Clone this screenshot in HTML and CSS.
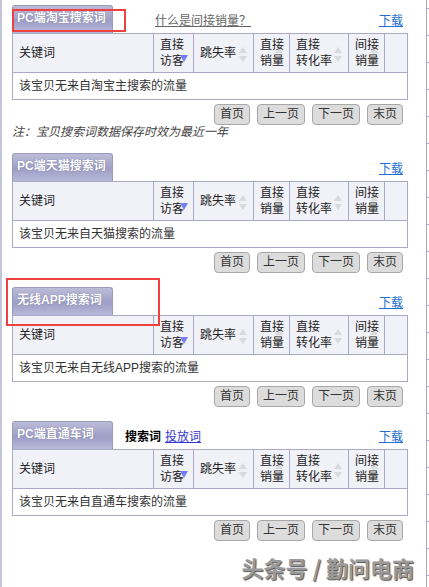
FILE: index.html
```html
<!DOCTYPE html>
<html lang="zh-CN">
<head>
  <meta charset="UTF-8" />
  <title>搜索词</title>
  <link rel="stylesheet" href="styles.css">
</head>
<body>
  <div class="page">
    <main class="content">

      <section class="panel">
        <div class="panel-head">
          <span class="tab">PC端淘宝搜索词</span>
          <a class="help" href="#">什么是间接销量？</a>
          <a class="download" href="#">下载</a>
        </div>
        <table class="grid">
          <colgroup>
            <col class="c-key"><col class="c-visit"><col class="c-bounce"><col class="c-sale"><col class="c-rate"><col class="c-sale"><col class="c-rest">
          </colgroup>
          <thead>
            <tr>
              <th>关键词</th>
              <th>直接<br>访客<span class="sort sort-desc"></span></th>
              <th>跳失率<span class="sort"></span></th>
              <th>直接<br>销量<span class="sort"></span></th>
              <th>直接<br>转化率<span class="sort"></span></th>
              <th>间接<br>销量<span class="sort"></span></th>
              <th></th>
            </tr>
          </thead>
          <tbody>
            <tr><td colspan="7">该宝贝无来自淘宝主搜索的流量</td></tr>
          </tbody>
        </table>
        <div class="pager">
          <button>首页</button><button>上一页</button><button>下一页</button><button>末页</button>
        </div>
        <p class="note">注：宝贝搜索词数据保存时效为最近一年</p>
        <span class="mark mark-first"></span>
      </section>

      <section class="panel">
        <div class="panel-head">
          <span class="tab">PC端天猫搜索词</span>
          <a class="download" href="#">下载</a>
        </div>
        <table class="grid">
          <colgroup>
            <col class="c-key"><col class="c-visit"><col class="c-bounce"><col class="c-sale"><col class="c-rate"><col class="c-sale"><col class="c-rest">
          </colgroup>
          <thead>
            <tr>
              <th>关键词</th>
              <th>直接<br>访客<span class="sort sort-desc"></span></th>
              <th>跳失率<span class="sort"></span></th>
              <th>直接<br>销量<span class="sort"></span></th>
              <th>直接<br>转化率<span class="sort"></span></th>
              <th>间接<br>销量<span class="sort"></span></th>
              <th></th>
            </tr>
          </thead>
          <tbody>
            <tr><td colspan="7">该宝贝无来自天猫搜索的流量</td></tr>
          </tbody>
        </table>
        <div class="pager">
          <button>首页</button><button>上一页</button><button>下一页</button><button>末页</button>
        </div>
      </section>

      <section class="panel">
        <div class="panel-head">
          <span class="tab">无线APP搜索词</span>
          <a class="download" href="#">下载</a>
        </div>
        <table class="grid">
          <colgroup>
            <col class="c-key"><col class="c-visit"><col class="c-bounce"><col class="c-sale"><col class="c-rate"><col class="c-sale"><col class="c-rest">
          </colgroup>
          <thead>
            <tr>
              <th>关键词</th>
              <th>直接<br>访客<span class="sort sort-desc"></span></th>
              <th>跳失率<span class="sort"></span></th>
              <th>直接<br>销量<span class="sort"></span></th>
              <th>直接<br>转化率<span class="sort"></span></th>
              <th>间接<br>销量<span class="sort"></span></th>
              <th></th>
            </tr>
          </thead>
          <tbody>
            <tr><td colspan="7">该宝贝无来自无线APP搜索的流量</td></tr>
          </tbody>
        </table>
        <div class="pager">
          <button>首页</button><button>上一页</button><button>下一页</button><button>末页</button>
        </div>
        <span class="mark mark-wireless"></span>
      </section>

      <section class="panel">
        <div class="panel-head">
          <span class="tab">PC端直通车词</span>
          <span class="kind">搜索词</span>
          <a class="kind-link" href="#">投放词</a>
          <a class="download" href="#">下载</a>
        </div>
        <table class="grid">
          <colgroup>
            <col class="c-key"><col class="c-visit"><col class="c-bounce"><col class="c-sale"><col class="c-rate"><col class="c-sale"><col class="c-rest">
          </colgroup>
          <thead>
            <tr>
              <th>关键词</th>
              <th>直接<br>访客<span class="sort sort-desc"></span></th>
              <th>跳失率<span class="sort"></span></th>
              <th>直接<br>销量<span class="sort"></span></th>
              <th>直接<br>转化率<span class="sort"></span></th>
              <th>间接<br>销量<span class="sort"></span></th>
              <th></th>
            </tr>
          </thead>
          <tbody>
            <tr><td colspan="7">该宝贝无来自直通车搜索的流量</td></tr>
          </tbody>
        </table>
        <div class="pager">
          <button>首页</button><button>上一页</button><button>下一页</button><button>末页</button>
        </div>
      </section>

    </main>
    <div class="rail"></div>
    <div class="watermark">头条号 / 勤问电商</div>
  </div>
</body>
</html>
```

FILE: styles.css
```css
html, body {
  margin: 0;
}

body {
  font-family: "Liberation Sans", "Noto Sans CJK SC", sans-serif;
  font-size: 12px;
  color: #333;
  background: #fff;
}

.page {
  position: relative;
  display: flex;
  box-sizing: border-box;
  height: 587px;
  overflow: hidden;
  border-left: 2px solid #c4c4d8;
}

.content {
  width: 395px;
  margin-left: 10px;
  padding-top: 5px;
}

.rail {
  width: 2px;
  margin-left: auto;
  border-left: 1px solid #a8a8c4;
  background: repeating-linear-gradient(to bottom, transparent 0 8px, #a8a8c4 8px 9px, transparent 9px 27px);
}

.panel {
  position: relative;
  margin-bottom: 14px;
}

.panel-head {
  display: flex;
  align-items: center;
  height: 28px;
}

.tab {
  box-sizing: border-box;
  align-self: flex-end;
  width: 101px;
  height: 28px;
  padding: 4px 0 0 4px;
  line-height: 16px;
  font-weight: bold;
  color: #fff;
  text-shadow: 0 0 1px rgba(70, 70, 110, 0.7);
  border: 1px solid #9a9abb;
  border-bottom: 0;
  border-radius: 3px 3px 0 0;
  background: linear-gradient(to bottom, #bcbcd8 0%, #9e9ec6 55%, #b8b8d8 100%);
}

.help {
  margin-left: 42px;
  color: #666;
}

.kind {
  margin-left: 12px;
  font-weight: bold;
  color: #000;
}

.kind-link {
  margin-left: 4px;
  color: #3434d0;
}

.download {
  margin-left: auto;
  margin-right: 4px;
  color: #1f6fd0;
}

.grid {
  width: 395px;
  border-collapse: collapse;
  table-layout: fixed;
}

.c-key { width: 141px; }
.c-visit { width: 40px; }
.c-bounce { width: 60px; }
.c-sale { width: 36px; }
.c-rate { width: 59px; }
.c-rest { width: 23px; }

.grid th,
.grid td {
  border: 1px solid #aaaac8;
  padding: 0 4px 0 6px;
  text-align: left;
}

/* z-index makes each header cell its own layer so the arrows sit under the text */
.grid th {
  position: relative;
  z-index: 0;
  height: 38px;
  line-height: 16px;
  white-space: nowrap;
  font-weight: normal;
  color: #222;
  background: #f1f1f8;
  vertical-align: middle;
}

.grid td {
  height: 26px;
  line-height: 16px;
}

.sort {
  position: absolute;
  z-index: -1;
  right: 6px;
  top: 50%;
  width: 8px;
  height: 15px;
  margin-top: -6px;
}

.sort::before,
.sort::after {
  content: "";
  position: absolute;
  left: 0;
  border-left: 4px solid transparent;
  border-right: 4px solid transparent;
}

.sort::before {
  top: 0;
  border-bottom: 6px solid #dadada;
}

.sort::after {
  bottom: 0;
  border-top: 6px solid #dadada;
}

.sort-desc {
  z-index: 1;
  right: 5px;
}

.sort-desc::before {
  display: none;
}

.sort-desc::after {
  border-top: 7px solid #7c7cf2;
}

.pager {
  display: flex;
  justify-content: flex-end;
  gap: 7px;
  margin: 4px 4px 0 0;
}

.pager button {
  height: 21px;
  padding: 0 5px;
  font: inherit;
  line-height: 19px;
  color: #333;
  background: #dcdcdc;
  border: 1px solid #a8a8a8;
  border-radius: 4px;
}

.note {
  margin: 0 0 4px;
  line-height: 14px;
  font-style: italic;
  color: #444;
}

.mark {
  position: absolute;
  border: 2px solid #f04040;
}

.mark-first {
  left: 0;
  top: 4px;
  width: 110px;
  height: 19px;
}

.mark-wireless {
  left: -6px;
  top: -9px;
  width: 150px;
  height: 44px;
}

.watermark {
  position: absolute;
  right: 15px;
  bottom: 7px;
  font-family: "Noto Sans CJK SC", sans-serif;
  font-size: 22px;
  line-height: 26px;
  font-weight: bold;
  color: #9a9a9a;
  text-shadow: 1px 1px 1px #555;
}
```
